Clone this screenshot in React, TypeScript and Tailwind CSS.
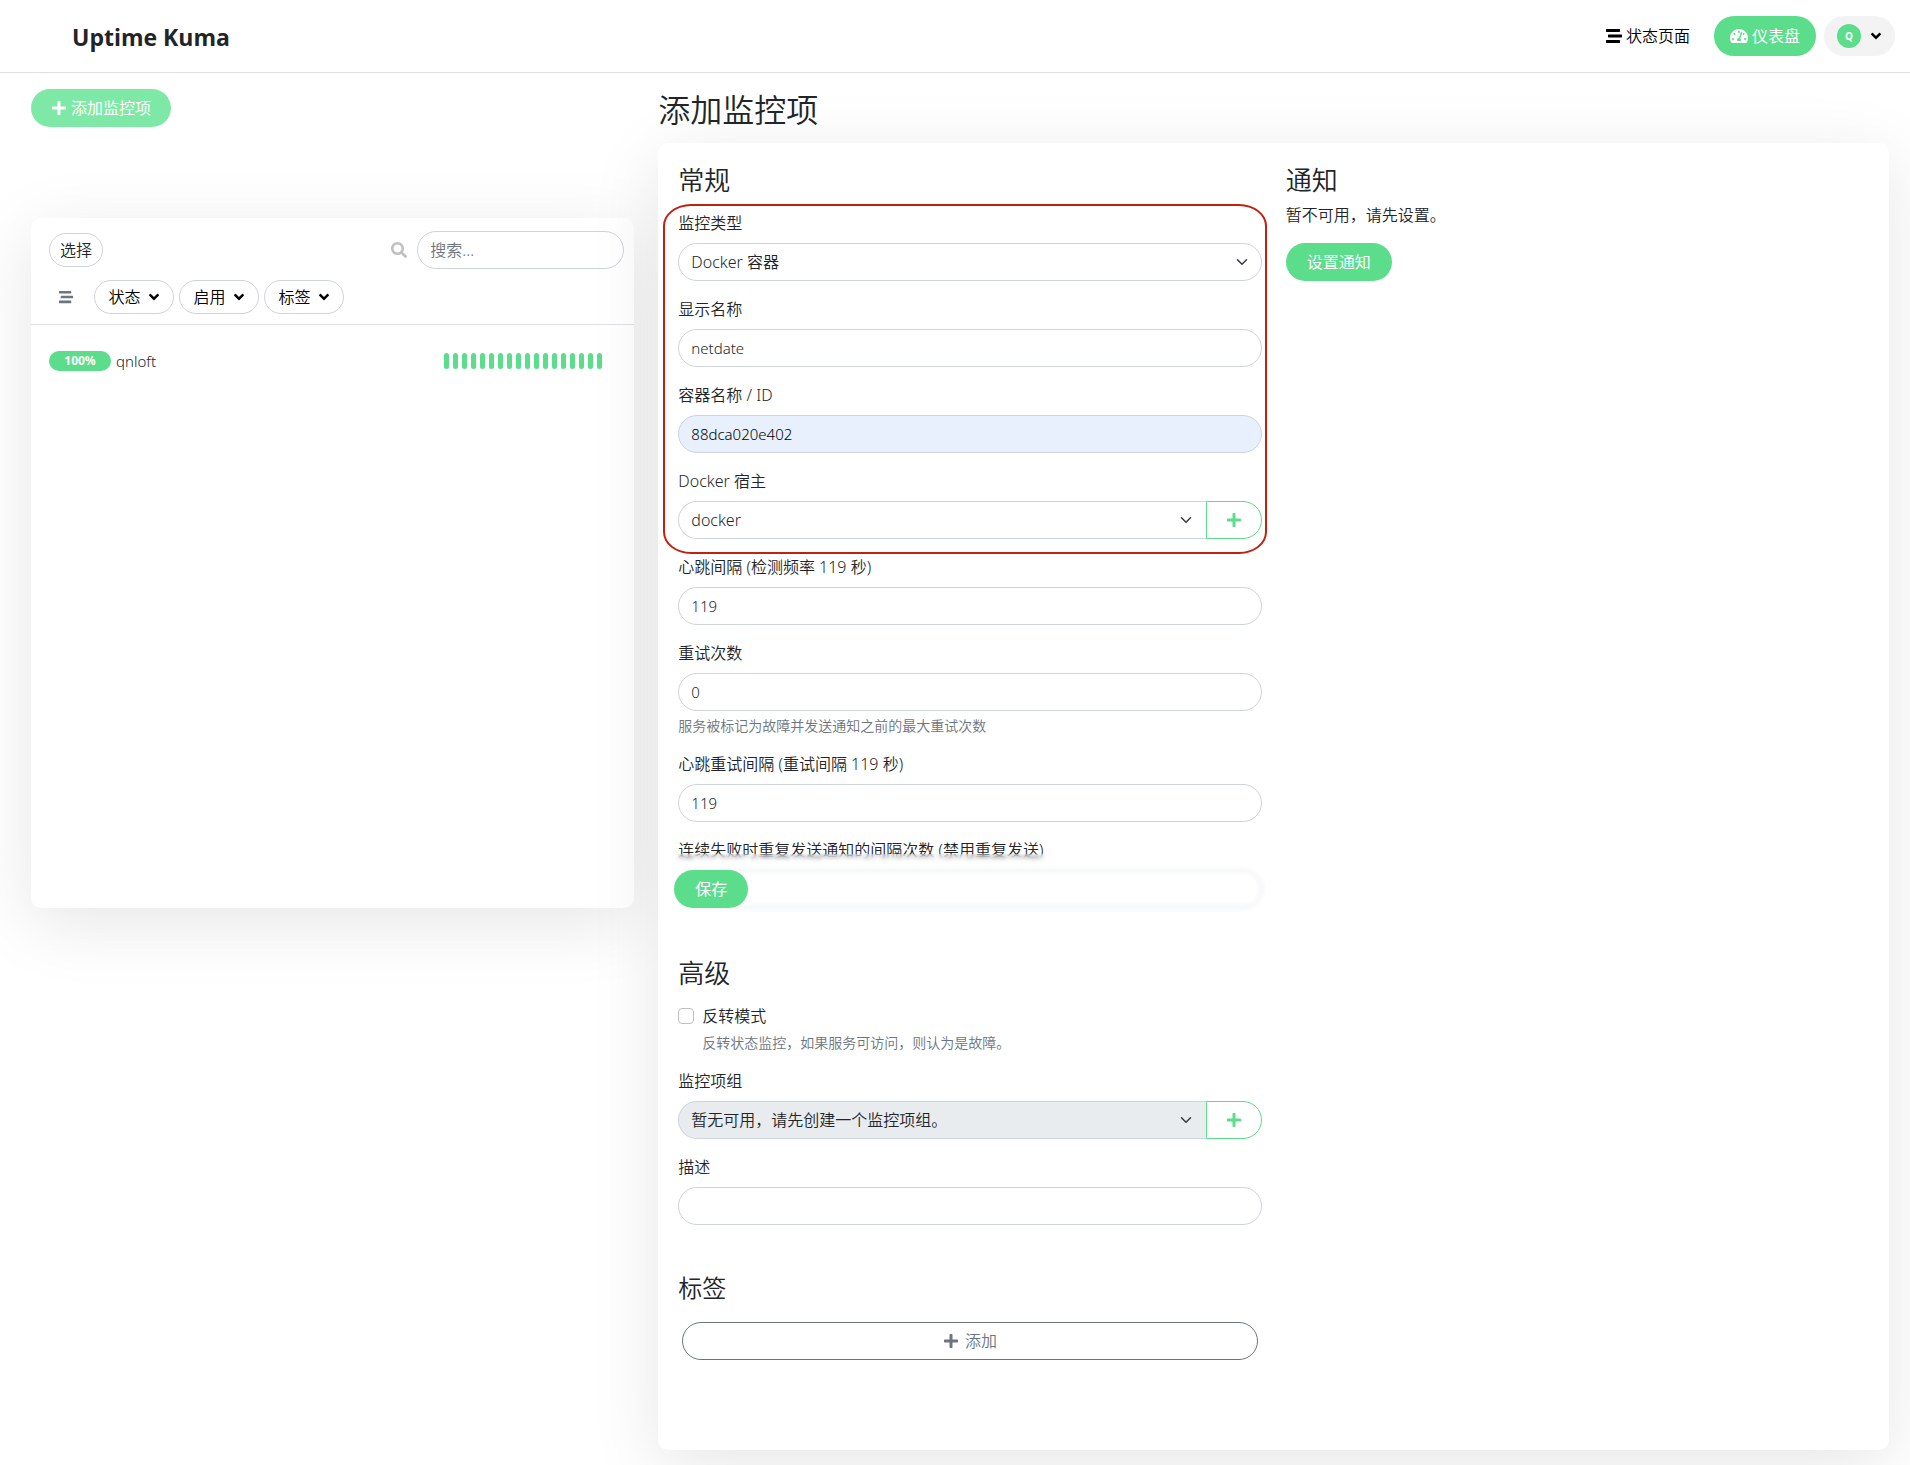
import React from 'react';
import { FaAngleDown, FaPlus, FaSearch, FaStream, FaTachometerAlt } from 'react-icons/fa';

const filters = ['状态', '启用', '标签'];
const beats = Array.from({ length: 18 }, (_, index) => index);

interface FieldProps {
  id: string;
  label: string;
  help?: string;
  children: React.ReactNode;
}

const Field: React.FC<FieldProps> = ({ id, label, help, children }) => (
  <div>
    <label htmlFor={id} className="block mb-2 leading-6">
      {label}
    </label>
    {children}
    {help && <p className="mt-1 text-sm leading-[21px] text-[#6c757d]">{help}</p>}
  </div>
);

interface TextInputProps {
  id: string;
  value: string;
  autofilled?: boolean;
}

const TextInput: React.FC<TextInputProps> = ({ id, value, autofilled }) => (
  <input
    id={id}
    type="text"
    defaultValue={value}
    className={`block w-full h-[38px] rounded-[19px] border border-[#ced4da] px-3 text-[15px] outline-none ${
      autofilled ? 'bg-[#e8f0fe] text-black' : 'bg-white text-[#212529]'
    }`}
  />
);

interface SelectInputProps {
  id: string;
  option: string;
  disabled?: boolean;
  addLabel?: string;
}

const SelectInput: React.FC<SelectInputProps> = ({ id, option, disabled, addLabel }) => (
  <div className="flex">
    <div className="relative flex-1">
      <select
        id={id}
        disabled={disabled}
        className={`block w-full h-[38px] appearance-none border border-[#ced4da] px-3 text-base text-[#212529] opacity-100 outline-none ${
          addLabel ? 'rounded-l-[19px] border-r-0' : 'rounded-[19px]'
        } ${disabled ? 'bg-[#e9ecef]' : 'bg-white'}`}
      >
        <option>{option}</option>
      </select>
      <svg
        viewBox="0 0 16 16"
        className="pointer-events-none absolute right-[14px] top-[13px] h-3 w-3"
        fill="none"
        stroke="#343a40"
        strokeWidth="2"
        strokeLinecap="round"
        strokeLinejoin="round"
      >
        <path d="m2 5 6 6 6-6" />
      </svg>
    </div>
    {addLabel && (
      <button
        type="button"
        aria-label={addLabel}
        className="flex h-[38px] w-14 items-center justify-center rounded-r-[19px] border border-[#5cdd8b] text-[#5cdd8b]"
      >
        <FaPlus className="h-4 w-4" />
      </button>
    )}
  </div>
);

const Header: React.FC = () => (
  <header className="flex h-[73px] items-center justify-between border-b border-[#dee2e6] pl-[72px] pr-[15px]">
    <a href="#" className="pt-[2px] font-['Open_Sans',sans-serif] text-[23px] font-bold">
      Uptime Kuma
    </a>
    <nav className="flex items-center gap-2">
      <a href="#status" className="mr-4 flex items-center gap-1 text-black">
        <FaStream className="h-4 w-4" />
        状态页面
      </a>
      <a href="#dashboard" className="flex h-10 items-center gap-1 rounded-full bg-[#5cdd8b] px-4 font-normal text-white">
        <FaTachometerAlt className="h-[18px] w-[18px]" />
        仪表盘
      </a>
      <button type="button" className="flex h-10 items-center gap-[7px] rounded-full bg-[#f3f3f3] pl-[13px] pr-[11px]">
        <span className="flex h-6 w-6 items-center justify-center rounded-full bg-[#5cdd8b] text-[10px] font-bold text-white">
          Q
        </span>
        <FaAngleDown className="h-4 w-4 text-black" />
      </button>
    </nav>
  </header>
);

const MonitorList: React.FC = () => (
  <section className="min-h-[690px] rounded-[10px] bg-white shadow-[0_15px_70px_rgba(0,0,0,0.1)]">
    <div className="border-b border-[#dee2e6] pl-[18px] pr-[10px] pt-[13px] pb-[10px]">
      <div className="flex items-center justify-between">
        <button type="button" className="h-[34px] rounded-[17px] border border-[#ced4da] px-[10px]">
          选择
        </button>
        <div className="flex items-center gap-[10px]">
          <FaSearch className="h-4 w-4 text-[#c0c0c0]" />
          <input
            type="search"
            aria-label="搜索"
            placeholder="搜索..."
            className="block w-full max-w-[207px] h-[38px] rounded-[19px] border border-[#ced4da] bg-white px-3 text-base text-[#212529] placeholder:text-[#6c757d] outline-none"
          />
        </div>
      </div>
      <div className="mt-[11px] flex items-center gap-[5px]">
        <button
          type="button"
          aria-label="排序"
          className="mr-[10px] flex h-[34px] w-[30px] items-center justify-end pr-[6px] text-[#6c757d]"
        >
          <FaStream className="h-[14px] w-[14px]" />
        </button>
        {filters.map((filter) => (
          <button
            key={filter}
            type="button"
            className="flex h-[34px] w-20 items-center justify-center gap-[5px] rounded-[17px] border border-[#ced4da] pl-[2px] text-black"
          >
            {filter}
            <FaAngleDown className="h-4 w-4" />
          </button>
        ))}
      </div>
    </div>

    {/* Monitor row */}
    <a href="#qnloft" className="flex items-center justify-between pl-[18px] pr-8 pt-[25px]">
      <span className="flex items-center gap-[5px]">
        <span className="flex h-5 w-[62px] items-center justify-center rounded-full bg-[#5cdd8b] text-xs font-bold text-white">
          100%
        </span>
        <span className="text-[15px]">qnloft</span>
      </span>
      <span className="flex gap-1">
        {beats.map((beat) => (
          <span key={beat} className="h-4 w-[5px] rounded-full bg-[#5cdd8b]" />
        ))}
      </span>
    </a>
  </section>
);

const GeneralSettings: React.FC = () => (
  <div>
    <h2 className="text-[26px] leading-[31px]">常规</h2>

    <div className="relative mt-[15px] flex flex-col gap-4">
      {/* Highlight around the Docker fields */}
      <div className="pointer-events-none absolute -left-[15px] -right-[5px] -top-[7px] -bottom-[15px] rounded-[28px/22px] border-2 border-[#c2210f]" />
      <Field id="type" label="监控类型">
        <SelectInput id="type" option="Docker 容器" />
      </Field>
      <Field id="name" label="显示名称">
        <TextInput id="name" value="netdate" />
      </Field>
      <Field id="container" label="容器名称 / ID">
        <TextInput id="container" value="88dca020e402" autofilled />
      </Field>
      <Field id="host" label="Docker 宿主">
        <SelectInput id="host" option="docker" addLabel="添加 Docker 宿主" />
      </Field>
    </div>

    <div className="mt-4 flex flex-col gap-4">
      <Field id="interval" label="心跳间隔 (检测频率 119 秒)">
        <TextInput id="interval" value="119" />
      </Field>
      <Field id="retries" label="重试次数" help="服务被标记为故障并发送通知之前的最大重试次数">
        <TextInput id="retries" value="0" />
      </Field>
      <Field id="retry-interval" label="心跳重试间隔 (重试间隔 119 秒)">
        <TextInput id="retry-interval" value="119" />
      </Field>
      <div className="relative">
        <Field id="resend" label="连续失败时重复发送通知的间隔次数 (禁用重复发送)">
          <TextInput id="resend" value="" />
        </Field>
        {/* Floating save bar */}
        <div className="absolute -left-5 -right-5 -bottom-4 bg-white/20 px-4 py-4 backdrop-blur-[2px]">
          <button type="submit" className="h-[38px] rounded-[19px] bg-[#5cdd8b] px-[21px] font-normal text-white">
            保存
          </button>
        </div>
      </div>
    </div>

    <h2 className="mt-[50px] text-[26px] leading-[31px]">高级</h2>

    <div className="mt-[15px] flex flex-col gap-4">
      <div className="flex gap-2">
        <input
          id="upside-down"
          type="checkbox"
          className="mt-1 h-4 w-4 appearance-none rounded-[4px] border border-[#bfbfbf] bg-white"
        />
        <div>
          <label htmlFor="upside-down" className="block leading-6">
            反转模式
          </label>
          <p className="mt-1 text-sm leading-[21px] text-[#6c757d]">反转状态监控，如果服务可访问，则认为是故障。</p>
        </div>
      </div>
      <Field id="group" label="监控项组">
        <SelectInput id="group" option="暂无可用，请先创建一个监控项组。" disabled addLabel="添加监控项组" />
      </Field>
      <Field id="description" label="描述">
        <TextInput id="description" value="" />
      </Field>
    </div>

    <h3 className="mt-12 text-2xl leading-[29px]">标签</h3>
    <div className="mt-5 px-1">
      <button
        type="button"
        className="flex h-[38px] w-full items-center justify-center gap-[6px] rounded-[19px] border border-[#6c757d] text-[#6c757d]"
      >
        <FaPlus className="h-4 w-4" />
        添加
      </button>
    </div>
  </div>
);

const Notifications: React.FC = () => (
  <div>
    <h2 className="text-[26px] leading-[31px]">通知</h2>
    <p className="mt-[7px] leading-6">暂不可用，请先设置。</p>
    <button type="button" className="mt-4 h-[38px] rounded-full bg-[#5cdd8b] px-[21px] font-normal text-white">
      设置通知
    </button>
  </div>
);

const App: React.FC = () => {
  return (
    <div className="min-h-screen bg-white font-['Noto_Sans','Noto_Sans_CJK_SC',sans-serif] text-base font-[350] text-[#212529]">
      <Header />
      <main className="grid grid-cols-3 items-start gap-6 pl-[31px] pr-[21px] pt-4 pb-4">
        <div>
          <a
            href="#add"
            className="inline-flex h-[38px] items-center gap-1 rounded-[19px] bg-[#7ee8a6] px-5 font-normal text-white"
          >
            <FaPlus className="h-4 w-4" />
            添加监控项
          </a>
          <div className="mt-[91px]">
            <MonitorList />
          </div>
        </div>

        <div className="col-span-2">
          <h1 className="text-[32px] leading-[42px]">添加监控项</h1>
          <form className="mt-3 grid grid-cols-2 gap-6 rounded-[10px] bg-white px-5 pt-[22px] pb-[90px] shadow-[0_15px_70px_rgba(0,0,0,0.1)]">
            <GeneralSettings />
            <Notifications />
          </form>
        </div>
      </main>
    </div>
  );
};

export default App;
